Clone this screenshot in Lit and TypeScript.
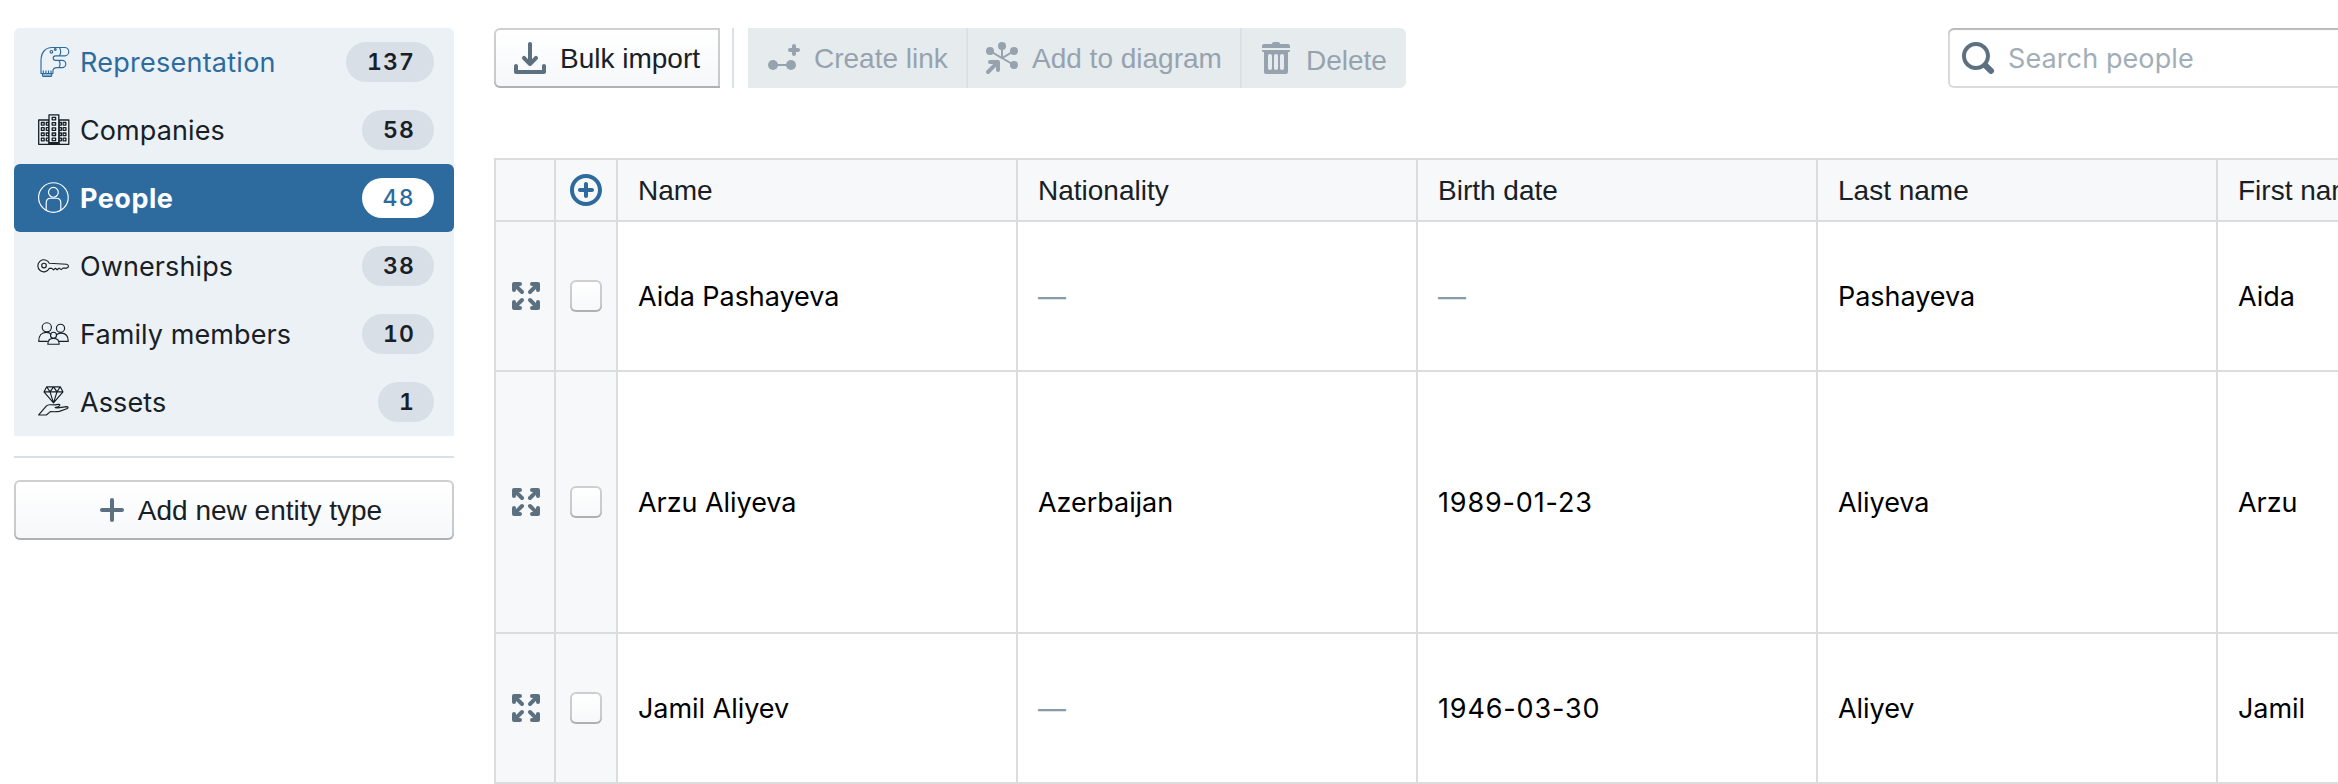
import { LitElement, html, css, svg, nothing } from "lit";
import type { SVGTemplateResult } from "lit";
import { customElement, property, state } from "lit/decorators.js";
import { classMap } from "lit/directives/class-map.js";

type Glyph = { box: number; stroke?: boolean; art: SVGTemplateResult };

const solid = (d: string): Glyph => ({ box: 16, art: svg`<path fill-rule="evenodd" d=${d} />` });
const line = (art: SVGTemplateResult): Glyph => ({ box: 32, stroke: true, art });

const windows = (xs: number[]) =>
  xs.map((x) => [8.5, 13.7, 19, 24.2].map((y) => svg`<rect x=${x} y=${y} width="2.8" height="2.6" />`));

const ICONS: Record<string, Glyph> = {
  import: solid(
    "M7.29 11.71c.18.18.43.29.71.29s.53-.11.71-.29l3-3a1.003 1.003 0 00-1.42-1.42L9 8.59V1c0-.55-.45-1-1-1S7 .45 7 1v7.59l-1.29-1.3a1.003 1.003 0 00-1.42 1.42l3 3zM15 11c-.55 0-1 .45-1 1v2H2v-2c0-.55-.45-1-1-1s-1 .45-1 1v3c0 .55.45 1 1 1h14c.55 0 1-.45 1-1v-3c0-.55-.45-1-1-1z"
  ),
  link: {
    box: 16,
    art: svg`<path d="M15 3h-1V2c0-.55-.45-1-1-1s-1 .45-1 1v1h-1c-.55 0-1 .45-1 1s.45 1 1 1h1v1c0 .55.45 1 1 1s1-.45 1-1V5h1c.55 0 1-.45 1-1s-.45-1-1-1z" /><circle cx="2.5" cy="11.5" r="2.5" /><circle cx="11.5" cy="11.5" r="2.5" /><rect x="4" y="11" width="6" height="1" />`,
  },
  diagram: {
    box: 16,
    art: svg`<circle cx="2" cy="4.5" r="2" /><circle cx="8" cy="2" r="2" /><circle cx="14" cy="4.5" r="2" /><circle cx="14" cy="11.5" r="2" /><path fill="none" stroke="currentColor" d="M2 4.5l6 3.5 6-3.5M8 2v6l6 3.5" /><path fill="none" stroke="currentColor" stroke-width="2" stroke-linecap="round" stroke-linejoin="round" d="M2 10h4v4M5.8 10.2L1 15" />`,
  },
  trash: solid(
    "M14.49 3.99h-13c-.28 0-.5.22-.5.5s.22.5.5.5h.5v10c0 .55.45 1 1 1h10c.55 0 1-.45 1-1v-10h.5c.28 0 .5-.22.5-.5s-.22-.5-.5-.5zm-8.5 9c0 .55-.45 1-1 1s-1-.45-1-1v-6c0-.55.45-1 1-1s1 .45 1 1v6zm3 0c0 .55-.45 1-1 1s-1-.45-1-1v-6c0-.55.45-1 1-1s1 .45 1 1v6zm3 0c0 .55-.45 1-1 1s-1-.45-1-1v-6c0-.55.45-1 1-1s1 .45 1 1v6zM14 1h-4c0-.55-.45-1-1-1H7c-.55 0-1 .45-1 1H2c-.55 0-1 .45-1 1v1h14V2c0-.55-.45-1-1-1z"
  ),
  search: solid(
    "M15.55 13.43l-2.67-2.68a6.94 6.94 0 001.11-3.76c0-3.87-3.13-7-7-7s-7 3.13-7 7 3.13 7 7 7c1.39 0 2.68-.42 3.76-1.11l2.68 2.67a1.498 1.498 0 102.12-2.12zm-8.56-1.44c-2.76 0-5-2.24-5-5s2.24-5 5-5 5 2.24 5 5-2.24 5-5 5z"
  ),
  plus: solid(
    "M13 7H9V3c0-.55-.45-1-1-1s-1 .45-1 1v4H3c-.55 0-1 .45-1 1s.45 1 1 1h4v4c0 .55.45 1 1 1s1-.45 1-1V9h4c.55 0 1-.45 1-1s-.45-1-1-1z"
  ),
  add: solid(
    "M10.99 6.99h-2v-2c0-.55-.45-1-1-1s-1 .45-1 1v2h-2c-.55 0-1 .45-1 1s.45 1 1 1h2v2c0 .55.45 1 1 1s1-.45 1-1v-2h2c.55 0 1-.45 1-1s-.45-1-1-1zm-3-7c-4.42 0-8 3.58-8 8s3.58 8 8 8 8-3.58 8-8-3.58-8-8-8zm0 14c-3.31 0-6-2.69-6-6s2.69-6 6-6 6 2.69 6 6-2.69 6-6 6z"
  ),
  expand: {
    box: 16,
    art: svg`<path fill="none" stroke="currentColor" stroke-width="2" stroke-linecap="round" stroke-linejoin="round" d="M2 5V2h3M2.4 2.4L6 6M14 5V2h-3M13.600 2.400L10 6M2 11v3h3M2.400 13.600L6 10M14 11v3h-3M13.600 13.600L10 10" />`,
  },
  glove: line(
    svg`<path d="M3 27.500V14.500C3 6.500 7.500 1.500 14 1.500h12.600a4.150 4.150 0 0 1 0 8.300H17.500a2.300 2.300 0 0 0 0 4.600h6.700a3.600 3.600 0 0 1 0 7.200H19c-2.600 0-4.100 1.400-4.100 3.900v2z" /><path d="M21.500 1.500c1.400 2.500 1.400 5.800 0 8.300M21 14.400c1.200 2 1.200 5.200 0 7.200" /><circle cx="13.400" cy="5.800" r="1.300" /><circle cx="17.300" cy="3.500" r=".9" /><path d="M5.300 24.500v3M7.900 24.500v3M10.500 24.500v3M13 24.500v3" /><rect x="4.500" y="27.500" width="9.200" height="2.900" rx="1" fill="currentColor" fill-opacity=".4" />`
  ),
  building: line(
    svg`<g stroke-width="1.300"><rect x=".7" y="6" width="10.300" height="24.300" /><rect x="21" y="6" width="9.800" height="24.300" />${windows([3.4, 8.3, 20.6, 25.1])}</g><rect class="mask" x="11" y=".8" width="9.800" height="29.500" stroke-width="1.300" /><g stroke-width="1.300">${[3.3, 8.6, 13.8, 19, 24.2].map(
      (y) => svg`<rect x="14.200" y=${y} width="3.400" height="2.500" />`
    )}</g><path stroke-width="2" d="M11 29h10" />`
  ),
  person: line(
    svg`<circle cx="15.400" cy="15.500" r="14.800" /><circle cx="15.400" cy="10.300" r="4.900" /><path d="M8.200 28.300V21c0-3.300 1.800-4.800 4.600-4.800h5.400c2.800 0 4.600 1.500 4.600 4.800v7.300" />`
  ),
  key: line(
    svg`<circle cx="6" cy="15.500" r="2.300" /><path d="M11.300 13.300a6 6 0 1 0 0 5h2.600l1.600 1.500 2-1.500 1.700 1.500 1.900-1.700 2 1.500 1.800-1.500h3.600c1.500-.5 2-1.100 2-1.900s-.8-1.600-2-1.900z" />`
  ),
  family: line(
    svg`<circle cx="8.800" cy="9.300" r="4.600" /><circle cx="22.500" cy="10.300" r="4.100" /><circle cx="15.500" cy="17.200" r="3" /><path d="M9.600 23.300H.7c0-5.600 3-9 7.600-9 2.100 0 3.800.8 5 2.200M21.200 23.300h9.100c0-5.200-2.800-8.200-7.300-8.200-2 0-3.500.6-4.600 1.800M9.800 26.200c0-3.700 2.300-5.900 5.700-5.900s5.700 2.200 5.700 5.900z" />`
  ),
  asset: line(
    svg`<path d="M8.700.8h13.600L25 5.900l-9.500 11L6 5.900zM6 5.900h19M12 5.900l3.500 11 3.500-11M8.700.8L12 5.900 15.500.8 19 5.900 22.300.8" /><path d="M.7 28.900L8 20.300c1.500-1.300 3-1.800 4.600-1.500l4.400.1c2.200-.4 3.300-.8 4.600-.4.700.8-.2 1.600-1.800 2.300l-2.600.8 2.600.3 8.900-1.300c1.400.1 1.700 1 .8 1.900l-8.100 2.900c-3 .4-6.500.4-9 .2L8.300 29z" />`
  ),
};

@customElement("ui-icon")
class UiIcon extends LitElement {
  @property() name = "";
  static styles = css`
    :host {
      display: block;
      flex: none;
      width: 32px;
      height: 32px;
    }
    svg {
      display: block;
      width: 100%;
      height: 100%;
      overflow: visible;
    }
    .solid {
      fill: currentColor;
    }
    .line {
      fill: none;
      stroke: currentColor;
      stroke-width: 1.15;
      stroke-linejoin: round;
    }
    .mask {
      fill: #ebf1f5;
    }
  `;
  render() {
    const g = ICONS[this.name];
    if (!g) return nothing;
    return html`<svg class=${g.stroke ? "line" : "solid"} viewBox="0 0 ${g.box} ${g.box}" aria-hidden="true">${g.art}</svg>`;
  }
}

@customElement("entity-nav")
class EntityNav extends LitElement {
  @state() private active = "People";
  private items = [
    { icon: "glove", label: "Representation", count: 137, link: true },
    { icon: "building", label: "Companies", count: 58 },
    { icon: "person", label: "People", count: 48 },
    { icon: "key", label: "Ownerships", count: 38 },
    { icon: "family", label: "Family members", count: 10 },
    { icon: "asset", label: "Assets", count: 1 },
  ];
  static styles = css`
    :host {
      display: block;
      flex: none;
      width: 440px;
    }
    .list {
      background: #ebf1f5;
      border-radius: 6px 6px 0 0;
    }
    .item {
      box-sizing: border-box;
      display: flex;
      align-items: center;
      height: 68px;
      padding: 0 20px 0 24px;
      color: #182026;
      font: 27px/36px Inter, sans-serif;
      letter-spacing: 0.1px;
      cursor: pointer;
    }
    .link {
      color: #2d6b9f;
      letter-spacing: 0.25px;
    }
    .active {
      background: #2d6b9f;
      border-radius: 6px;
      color: #fff;
      font-weight: 700;
      letter-spacing: 0.5px;
    }
    .label {
      flex: 1;
      padding: 2px 0 0 10px;
    }
    .badge {
      box-sizing: border-box;
      height: 40px;
      padding: 0 19px 0 21px;
      border-radius: 20px;
      background: #d8dfe6;
      color: #182026;
      font: 600 23px/40px Inter, sans-serif;
      font-variant-numeric: tabular-nums;
      letter-spacing: 1.1px;
    }
    .active .badge {
      background: #fff;
      color: #2d6b9f;
      font-weight: 500;
      letter-spacing: 1.3px;
    }
    .rule {
      height: 2px;
      margin: 20px 0 22px;
      background: #d9e0e6;
    }
    .new {
      box-sizing: border-box;
      display: flex;
      justify-content: center;
      align-items: center;
      gap: 10px;
      width: 100%;
      height: 60px;
      padding: 0 0 0 10px;
      border: 0;
      border-radius: 6px;
      background: linear-gradient(#fff, #f5f7f9);
      box-shadow: inset 0 0 0 2px rgba(16, 16, 16, 0.2), inset 0 -2px 0 rgba(16, 16, 16, 0.13);
      color: #182026;
      font: 28px/36px "Liberation Sans", Arial, sans-serif;
    }
    .new span {
      padding-top: 2px;
    }
    .new ui-icon {
      color: #5c7080;
    }
  `;
  render() {
    return html`
      <nav class="list">
        ${this.items.map(
          (i) => html`<div
            class=${classMap({ item: true, link: !!i.link, active: i.label === this.active })}
            @click=${() => (this.active = i.label)}
          >
            <ui-icon name=${i.icon}></ui-icon><span class="label">${i.label}</span><span class="badge">${i.count}</span>
          </div>`
        )}
      </nav>
      <div class="rule"></div>
      <button class="new"><ui-icon name="plus"></ui-icon><span>Add new entity type</span></button>
    `;
  }
}

@customElement("entity-toolbar")
class EntityToolbar extends LitElement {
  static styles = css`
    :host {
      display: flex;
      height: 60px;
    }
    .btn {
      box-sizing: border-box;
      display: flex;
      align-items: center;
      gap: 14px;
      height: 60px;
      padding: 0 20px;
      border: 0;
      white-space: nowrap;
      color: #182026;
      font: 28px/36px "Liberation Sans", Arial, sans-serif;
    }
    .btn span {
      padding-top: 2px;
    }
    .import {
      width: 226px;
      border-radius: 6px 0 0 6px;
      background: linear-gradient(#fff, #f5f7f9);
      box-shadow: inset 0 0 0 2px rgba(16, 22, 26, 0.2), inset 0 -2px 0 rgba(16, 22, 26, 0.13);
    }
    .import ui-icon {
      color: #5c7080;
    }
    .sep {
      width: 2px;
      margin: 0 14px 0 12px;
      background: #dbe2e7;
    }
    .group {
      display: flex;
      overflow: hidden;
      border-radius: 0 6px 6px 0;
      background: #e6ebee;
    }
    .group .btn {
      background: none;
      color: #96a3ae;
    }
    .group .btn + .btn {
      border-left: 2px solid #dbe2e7;
      padding-left: 18px;
    }
    .link {
      width: 218px;
    }
    .diagram {
      width: 274px;
    }
    .delete {
      width: 166px;
    }
    .delete span {
      padding-top: 6px;
    }
    .search {
      box-sizing: border-box;
      display: flex;
      align-items: center;
      gap: 14px;
      flex: none;
      width: 420px;
      margin-left: auto;
      padding: 0 14px;
      border-radius: 6px;
      background: #fff;
      box-shadow: inset 0 0 0 2px rgba(16, 16, 16, 0.15), inset 0 2px 1px rgba(16, 16, 16, 0.16);
      color: #5c7080;
    }
    input {
      flex: 1;
      min-width: 0;
      padding: 2px 0 0;
      border: 0;
      outline: 0;
      background: none;
      font: 27px/36px Inter, sans-serif;
      letter-spacing: 0.1px;
    }
    input::placeholder {
      color: #a1aeb8;
      opacity: 1;
    }
  `;
  render() {
    return html`
      <button class="btn import"><ui-icon name="import"></ui-icon><span>Bulk import</span></button>
      <div class="sep"></div>
      <div class="group">
        <button class="btn link" disabled><ui-icon name="link"></ui-icon><span>Create link</span></button>
        <button class="btn diagram" disabled><ui-icon name="diagram"></ui-icon><span>Add to diagram</span></button>
        <button class="btn delete" disabled><ui-icon name="trash"></ui-icon><span>Delete</span></button>
      </div>
      <label class="search"><ui-icon name="search"></ui-icon><input placeholder="Search people" /></label>
    `;
  }
}

@customElement("entity-table")
class EntityTable extends LitElement {
  private columns = ["Name", "Nationality", "Birth date", "Last name", "First name"];
  private rows = [
    ["Aida Pashayeva", "", "", "Pashayeva", "Aida"],
    ["Arzu Aliyeva", "Azerbaijan", "1989-01-23", "Aliyeva", "Arzu"],
    ["Jamil Aliyev", "", "1946-03-30", "Aliyev", "Jamil"],
  ];
  static styles = css`
    :host {
      display: block;
    }
    .grid {
      display: grid;
      grid-template-columns: 60px 62px repeat(5, 400px);
      grid-template-rows: 62px 150px 262px 150px;
      width: max-content;
      border-top: 2px solid #dcdcdc;
      border-left: 2px solid #dcdcdc;
    }
    .cell {
      display: flex;
      align-items: center;
      padding: 2px 0 0 20px;
      border-right: 2px solid #dcdcdc;
      border-bottom: 2px solid #dcdcdc;
      color: #000;
      font: 27px/36px Inter, sans-serif;
      letter-spacing: -0.05px;
      white-space: nowrap;
    }
    .head {
      background: #f6f8fa;
      color: #182026;
      font: 28px/36px "Liberation Sans", Arial, sans-serif;
      letter-spacing: 0;
    }
    .tool {
      justify-content: center;
      padding: 0;
      background: #f6f8fa;
      color: #5c7080;
    }
    .open {
      padding-left: 2px;
    }
    .add {
      color: #2d6b9f;
    }
    .date {
      letter-spacing: 0.85px;
    }
    .empty {
      color: #8a9ba8;
      font-size: 28px;
    }
    .check {
      width: 32px;
      height: 32px;
      border-radius: 6px;
      background: linear-gradient(#fff, #f6f8f9);
      box-shadow: inset 0 0 0 2px rgba(16, 16, 16, 0.2), inset 0 -2px 0 rgba(16, 16, 16, 0.13);
    }
  `;
  render() {
    return html`<div class="grid">
      <div class="cell tool"></div>
      <div class="cell tool add"><ui-icon name="add"></ui-icon></div>
      ${this.columns.map((c) => html`<div class="cell head">${c}</div>`)}
      ${this.rows.map(
        (r) => html`
          <div class="cell tool open"><ui-icon name="expand"></ui-icon></div>
          <div class="cell tool"><div class="check" role="checkbox" aria-checked="false"></div></div>
          ${r.map(
            (v) => html`<div class=${classMap({ cell: true, empty: !v, date: /^\d/.test(v) })}>${v || "—"}</div>`
          )}
        `
      )}
    </div>`;
  }
}

@customElement("app-root")
class AppRoot extends LitElement {
  static styles = css`
    :host {
      box-sizing: border-box;
      display: flex;
      align-items: flex-start;
      gap: 40px;
      height: 784px;
      padding: 28px 0 0 14px;
      overflow: hidden;
      background: #fff;
    }
    .main {
      display: flex;
      flex-direction: column;
      gap: 70px;
      flex: none;
      width: 1874px;
    }
  `;
  render() {
    return html`
      <entity-nav></entity-nav>
      <div class="main">
        <entity-toolbar></entity-toolbar>
        <entity-table></entity-table>
      </div>
    `;
  }
}
